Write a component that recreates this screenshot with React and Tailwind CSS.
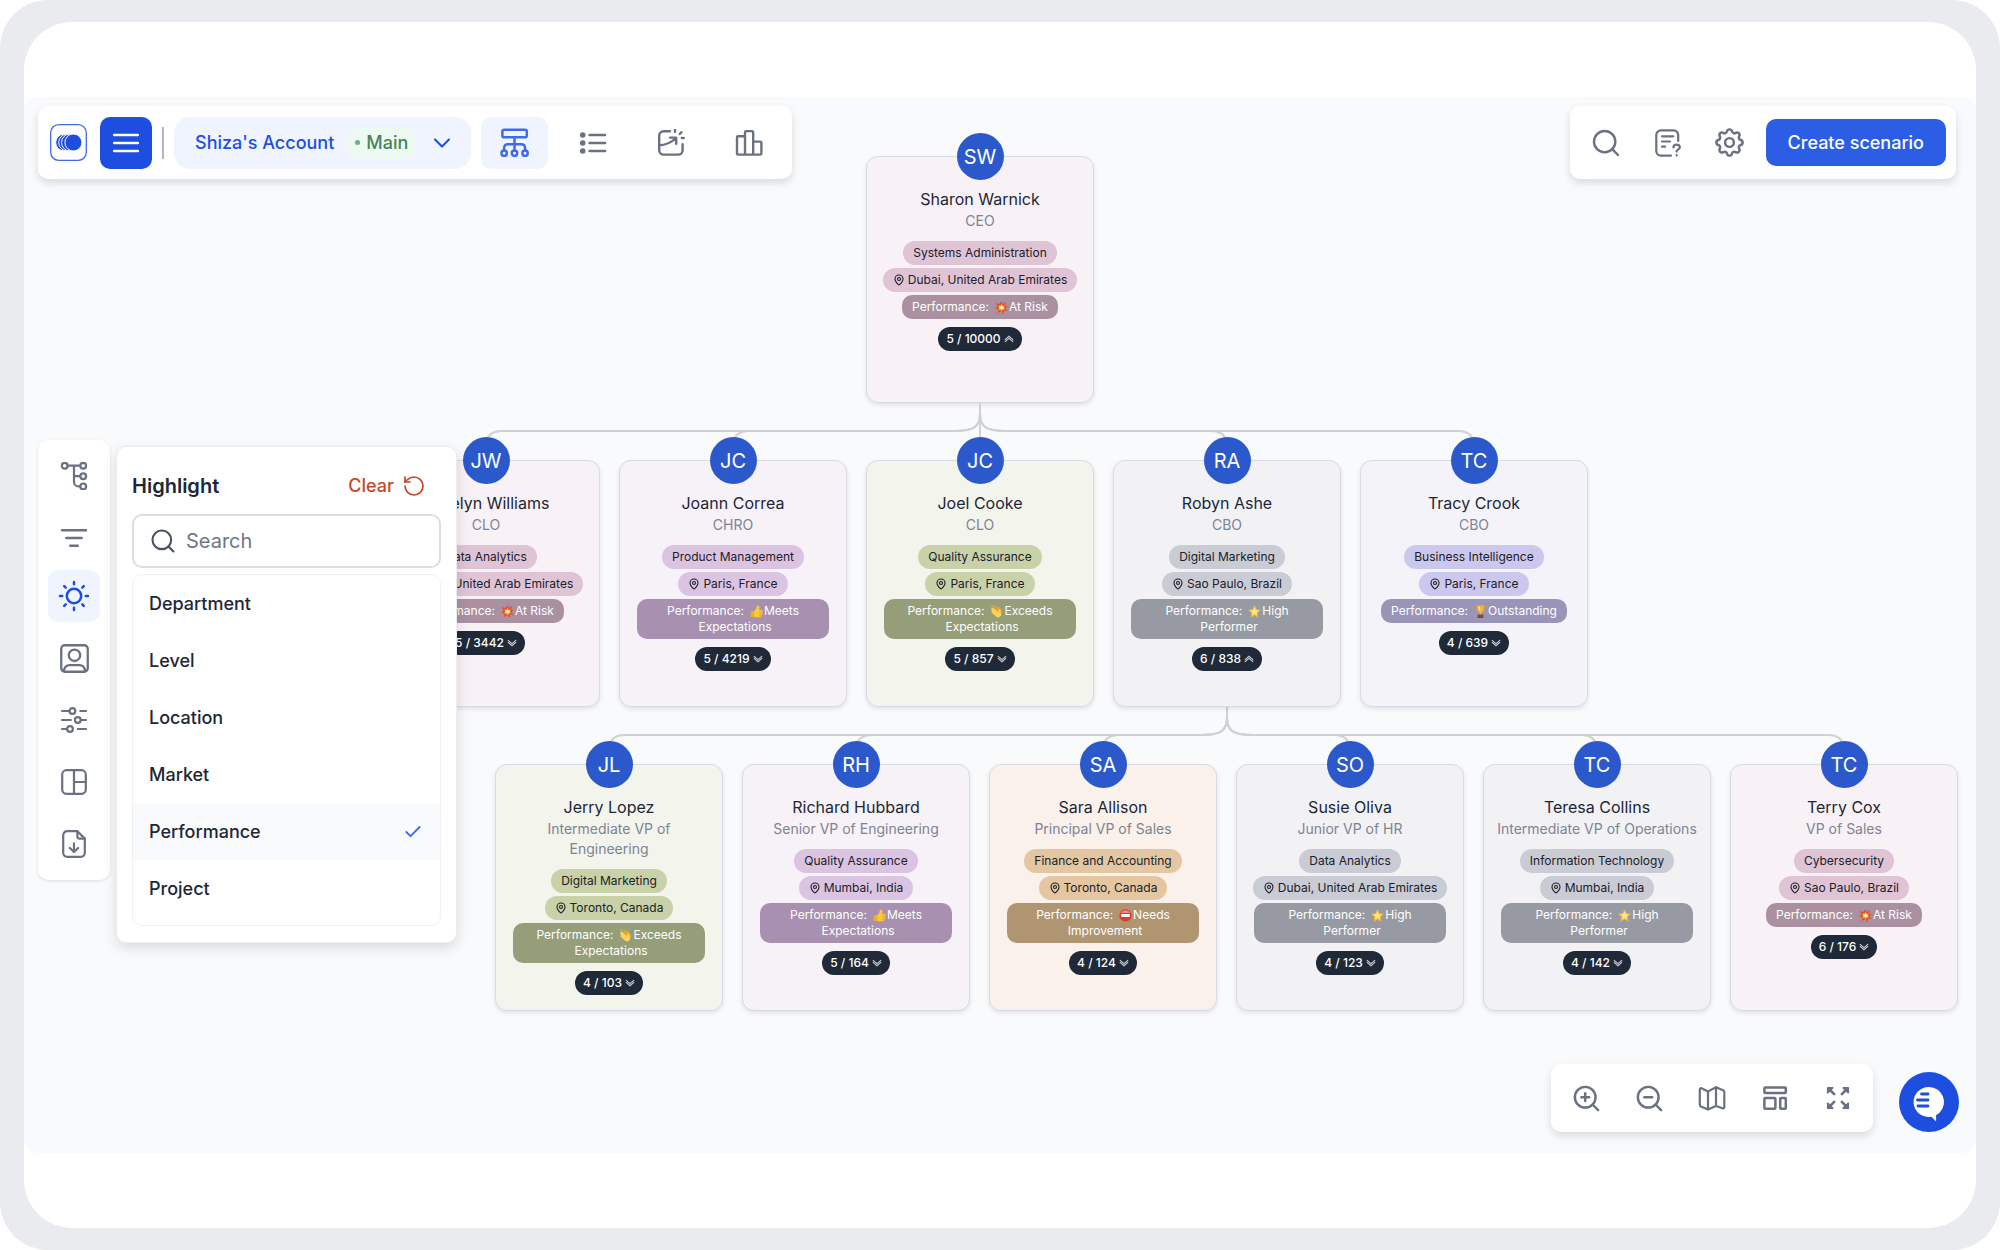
import React from "react";
import clsx from "clsx";
import { Check, ChevronDown, MapPin, RotateCcw, Search, ZoomIn, ZoomOut } from "lucide-react";
import { TbSettings } from "react-icons/tb";

function Icon({ children, className = "size-7", stroke = 2.2 }) {
  return (
    <svg
      viewBox="0 0 28 28"
      className={className}
      fill="none"
      stroke="currentColor"
      strokeWidth={stroke}
      strokeLinecap="round"
      strokeLinejoin="round"
      aria-hidden="true"
    >
      {children}
    </svg>
  );
}

const MenuIcon = () => (
  <Icon stroke={2.5}>
    <path d="M2.2 6h23.6M2.2 14h23.6M2.2 22h23.6" />
  </Icon>
);

const OrgIcon = () => (
  <Icon className="size-[29px]" stroke={2.4}>
    <rect x="2.3" y="1.6" width="23.6" height="7.4" rx="1.8" />
    <path d="M14 9v12.5M4 21.5V19a3.4 3.4 0 0 1 3.4-3.4h13.4a3.4 3.4 0 0 1 3.4 3.4v2.5" />
    <circle cx="4" cy="24.4" r="2.6" />
    <circle cx="14" cy="24.4" r="2.6" />
    <circle cx="24.2" cy="24.4" r="2.6" />
  </Icon>
);

const ListIcon = () => (
  <Icon stroke={2.5}>
    <path d="M10.5 6H26M10.5 14H26M10.5 22H26" />
    <g fill="currentColor" stroke="none">
      <circle cx="3.7" cy="6" r="2.8" />
      <circle cx="3.7" cy="14" r="2.8" />
      <circle cx="3.7" cy="22" r="2.8" />
    </g>
  </Icon>
);

const InsightIcon = () => (
  <Icon stroke={2.4}>
    <path d="M13 2.2H6.6a4.4 4.4 0 0 0-4.4 4.4v14.6a4.4 4.4 0 0 0 4.4 4.4h14.6a4.4 4.4 0 0 0 4.4-4.4v-6" />
    <path d="M2.4 16.2c6.2 0 11.6-2.4 16.6-7.2M13 8.6h6.2v6.2" />
    <path d="M18 .9v2M22.8 5l1.6-1.8M24.8 9h2" />
  </Icon>
);

const BarsIcon = () => (
  <Icon stroke={2.4}>
    <path d="M10 25.6H3.2a1.2 1.2 0 0 1-1.2-1.2V8.4a1.2 1.2 0 0 1 1.2-1.2H10zM10 25.6V3.3a1.2 1.2 0 0 1 1.2-1.2h5.8a1.2 1.2 0 0 1 1.2 1.2v22.3zM18.2 12.6h7a1.2 1.2 0 0 1 1.2 1.2v10.6a1.2 1.2 0 0 1-1.2 1.2h-7z" />
  </Icon>
);

const FormIcon = () => (
  <Icon>
    <path d="M24.2 12V6A4.6 4.6 0 0 0 19.6 1.4H6.9A4.6 4.6 0 0 0 2.3 6v16a4.6 4.6 0 0 0 4.6 4.6H17" />
    <path d="M8 7.3h11.3M8 12.5h8M8 17.7h3" />
    <path d="M19.4 18.4c0-3.8 6.4-3.8 6.4 0 0 2-3.2 2-3.2 4.2M22.6 26.2v.2" />
  </Icon>
);

const TreeIcon = () => (
  <Icon>
    <circle cx="4.7" cy="3.7" r="2.9" />
    <circle cx="23.2" cy="3.7" r="2.9" />
    <circle cx="23.2" cy="14.2" r="2.9" />
    <circle cx="23.2" cy="24.4" r="2.9" />
    <path d="M7.6 3.7h12.6M14 3.7v16.2a4.5 4.5 0 0 0 4.5 4.5h1.7M14 14.2h6.2" />
  </Icon>
);

const FilterIcon = () => (
  <Icon stroke={2.4}>
    <path d="M2 6.3h24M6.3 14h15.4M10.2 21.8h7.6" />
  </Icon>
);

const SunIcon = () => (
  <svg viewBox="0 0 32 32" className="size-8" fill="none" stroke="currentColor" strokeWidth="2.5" strokeLinecap="round" aria-hidden="true">
    <circle cx="16" cy="16" r="7.2" />
    <path d="M16 2v2.2M16 27.8V30M2 16h2.2M27.8 16H30M6.2 6.2l1.5 1.5M24.3 24.3l1.5 1.5M6.2 25.8l1.5-1.5M24.3 7.7l1.5-1.5" />
  </svg>
);

const ProfileIcon = () => (
  <Icon className="size-[29px]">
    <rect x="1.2" y="1.2" width="25.6" height="25.6" rx="3.4" />
    <circle cx="14" cy="10.9" r="5.5" />
    <path d="M3.8 26c.4-4 2.4-5.6 5.6-5.6h9.2c3.2 0 5.2 1.6 5.6 5.6" />
  </Icon>
);

const SlidersIcon = () => (
  <Icon>
    <path d="M2 5h7.4M20.3 5H26M2 14h8.8M20.8 14H26M2 23h4.9M17.8 23H26" />
    <circle cx="12.4" cy="5" r="2.9" />
    <circle cx="17.8" cy="14" r="2.9" />
    <circle cx="10" cy="23" r="2.9" />
  </Icon>
);

const LayoutIcon = () => (
  <Icon>
    <rect x="2.2" y="2.2" width="23.6" height="23.6" rx="4.4" />
    <path d="M14 2.2v23.6M14 14h11.8" />
  </Icon>
);

const FileDownIcon = () => (
  <Icon>
    <path d="M17.4 1.2H7.2a4 4 0 0 0-4 4v17.6a4 4 0 0 0 4 4h13.6a4 4 0 0 0 4-4V8.6z" />
    <path d="M17.4 1.2v5.4a2 2 0 0 0 2 2h5.4M14 13.4v8.4M9.8 18l4.2 4 4.2-4" />
  </Icon>
);

const MapIcon = () => (
  <Icon>
    <path d="M10 7.4 3.5 4.3a1.2 1.2 0 0 0-1.7 1.1v15.4a2 2 0 0 0 1.1 1.8L10 25.6l8-3.6 6.6 2.3a1.2 1.2 0 0 0 1.7-1.1V8a2 2 0 0 0-1.2-1.8L18 3.2zM10 7.4v18.2M18 3.2V22" />
  </Icon>
);

const WidgetsIcon = () => (
  <Icon stroke={2.5}>
    <rect x="3.4" y="3.6" width="21.4" height="5.4" rx=".8" />
    <rect x="3.4" y="14" width="11" height="10.8" rx=".8" />
    <rect x="19.2" y="14" width="5.6" height="10.8" rx=".8" />
  </Icon>
);

const ExpandIcon = () => (
  <Icon stroke={2.6}>
    <path d="M3.8 8.6V3.8h4.8zM19.4 3.8h4.8v4.8zM3.8 19.4v4.8h4.8zM24.2 19.4v4.8h-4.8z" fill="currentColor" strokeWidth="1.8" />
    <path d="M5 5l5.2 5.2M23 5l-5.2 5.2M5 23l5.2-5.2M23 23l-5.2-5.2" />
  </Icon>
);

function Logo() {
  return (
    <svg viewBox="0 0 37 37" className="size-[37px]" aria-hidden="true">
      <rect x=".7" y=".7" width="35.6" height="35.6" rx="8" fill="#fff" stroke="#3f6ae8" strokeWidth="1.3" />
      <g fill="#1d4ee0" stroke="#fff" strokeWidth="1">
        <circle cx="14.2" cy="18.5" r="8.5" />
        <circle cx="17.2" cy="18.5" r="8.5" />
        <circle cx="20" cy="18.5" r="8.5" />
        <circle cx="23.4" cy="18.5" r="8.5" />
      </g>
    </svg>
  );
}

// Small rating symbols shown inside the performance badge
const symbols = {
  risk: (
    <>
      <path d="M8 0l1.7 3.8L13.6 1l-1 4.3L16 6.5l-3 2.2 2.6 4-4.2-1L10 16l-2.4-3.6L3.4 15l.6-4.4L0 9.6l3-2.4L.8 2.6l4.6 1.2z" fill="#e0532f" />
      <path d="M8.2 3.4l1 2.6 2.8-.4-1.2 2.4 1.6 2.2-2.8-.2-1.2 2.6-1.4-2.4-3 .6L5.400 8 4 5.600l2.800.4z" fill="#ffd257" />
      <circle cx="8.2" cy="8" r="1.8" fill="#fff7d8" />
    </>
  ),
  meets: (
    <>
      <path d="M5 7.4C7.4 5.6 8.2 3.4 8.4.8c1.9-.9 3.4.6 3.2 2.8l-.5 2.7H14c1.5 0 1.9 1.5 1.1 2.3.8.9.5 1.9-.3 2.4.5.9.1 1.8-.7 2.2.2 1.2-.6 2-1.7 2H7.8L5 14.4z" fill="#fbc83c" />
      <path d="M.8 7.6h4.4v7.2H.8z" fill="#f0ac2b" />
      <path d="M11.5 8.6h3.3M11.5 11h3M11.3 13.2h2.6" stroke="#d08b1f" strokeWidth=".7" />
    </>
  ),
  exceeds: (
    <>
      <path d="M5 2.2l1.8-1c1-.6 1.9.3 1.6 1.2l3.6.4 2.6 5.200c.8 3.400-1.500 6.400-4.600 6.200z" fill="#e8a32c" />
      <path d="M2.4 4.4C1.8 3.2 3.2 2.4 4 3.4l6 5.600.6-3c.6-1.400 2.200-1 2.200.4l.8 5.400c0 3-3.400 4.600-6 2.800L2 9.200c-.8-.8.200-2 1-1.400L1.400 6c-.6-1 .4-1.800 1-1.600z" fill="#ffd25a" />
      <path d="M1.6.8l.8 1.4M3.8.2l.2 1.4" stroke="#f4d58a" strokeWidth=".9" />
    </>
  ),
  high: (
    <>
      <path d="M8 0l2.400 5.200 5.600.6-4.200 3.900L13 15.600 8 12.800l-5 2.800 1.200-5.900L0 5.800l5.600-.6z" fill="#f7b92d" />
      <path d="M8 2.800l1.500 3.500 3.800.4-2.800 2.600.8 3.700L8 11.100 4.700 13l.8-3.700-2.800-2.600 3.800-.4z" fill="#ffe58a" />
    </>
  ),
  outstanding: (
    <>
      <path d="M3.6 2H.8c0 3.6 1.400 5 4 5.200M12.400 2h2.800c0 3.600-1.400 5-4 5.200" fill="none" stroke="#d9972a" strokeWidth="1.2" />
      <path d="M3.4.6h9.200c0 5-1.200 8-3.600 9v2.200H7V9.600C4.600 8.600 3.400 5.600 3.400.6z" fill="#efb23a" />
      <path d="M5.600 1.600h2c0 3 .1 4.800.4 6.600-1.800-1-2.400-3.400-2.400-6.600z" fill="#ffe08a" />
      <path d="M4.400 11.800h7.200V16H4.400z" fill="#7c4a2d" />
    </>
  ),
  needs: (
    <>
      <circle cx="8" cy="8" r="7.6" fill="#e13a2f" />
      <path d="M2 5a7 7 0 0 1 12 0z" fill="#f4877b" />
      <rect x="2.6" y="6.2" width="10.8" height="3.6" rx=".8" fill="#fff" />
    </>
  ),
};

const ratings = {
  risk: ["At Risk"],
  meets: ["Meets", "Expectations"],
  exceeds: ["Exceeds", "Expectations"],
  high: ["High", "Performer"],
  outstanding: ["Outstanding"],
  needs: ["Needs", "Improvement"],
};

const tones = {
  pink: { card: "bg-[#f8f1f6]", pill: "bg-[#dfc4d5]", rating: "bg-[#ab90a2]" },
  purple: { card: "bg-[#f7f1f8]", pill: "bg-[#dbc4e1]", rating: "bg-[#a890b0]" },
  green: { card: "bg-[#f3f4eb]", pill: "bg-[#c8d1a8]", rating: "bg-[#959e79]" },
  gray: { card: "bg-[#f2f2f5]", pill: "bg-[#c9cbd5]", rating: "bg-[#979aa3]" },
  lavender: { card: "bg-[#f4f3fa]", pill: "bg-[#ccc7ec]", rating: "bg-[#9a94b8]" },
  orange: { card: "bg-[#f9f1ea]", pill: "bg-[#e4c7a1]", rating: "bg-[#af9570]" },
};

const ceo = { initials: "SW", name: "Sharon Warnick", title: "CEO", dept: "Systems Administration", place: "Dubai, United Arab Emirates", rating: "risk", count: "5 / 10000", open: true, tone: "pink" };

const chiefs = [
  { initials: "JW", name: "Jocelyn Williams", title: "CLO", dept: "Data Analytics", place: "Dubai, United Arab Emirates", rating: "risk", count: "5 / 3442", tone: "pink" },
  { initials: "JC", name: "Joann Correa", title: "CHRO", dept: "Product Management", place: "Paris, France", rating: "meets", count: "5 / 4219", tone: "purple" },
  { initials: "JC", name: "Joel Cooke", title: "CLO", dept: "Quality Assurance", place: "Paris, France", rating: "exceeds", count: "5 / 857", tone: "green" },
  { initials: "RA", name: "Robyn Ashe", title: "CBO", dept: "Digital Marketing", place: "Sao Paulo, Brazil", rating: "high", count: "6 / 838", open: true, tone: "gray" },
  { initials: "TC", name: "Tracy Crook", title: "CBO", dept: "Business Intelligence", place: "Paris, France", rating: "outstanding", count: "4 / 639", tone: "lavender" },
];

const vps = [
  { initials: "JL", name: "Jerry Lopez", title: "Intermediate VP of Engineering", dept: "Digital Marketing", place: "Toronto, Canada", rating: "exceeds", count: "4 / 103", tone: "green" },
  { initials: "RH", name: "Richard Hubbard", title: "Senior VP of Engineering", dept: "Quality Assurance", place: "Mumbai, India", rating: "meets", count: "5 / 164", tone: "purple" },
  { initials: "SA", name: "Sara Allison", title: "Principal VP of Sales", dept: "Finance and Accounting", place: "Toronto, Canada", rating: "needs", count: "4 / 124", tone: "orange" },
  { initials: "SO", name: "Susie Oliva", title: "Junior VP of HR", dept: "Data Analytics", place: "Dubai, United Arab Emirates", rating: "high", count: "4 / 123", tone: "gray" },
  { initials: "TC", name: "Teresa Collins", title: "Intermediate VP of Operations", dept: "Information Technology", place: "Mumbai, India", rating: "high", count: "4 / 142", tone: "gray" },
  { initials: "TC", name: "Terry Cox", title: "VP of Sales", dept: "Cybersecurity", place: "Sao Paulo, Brazil", rating: "risk", count: "6 / 176", tone: "pink" },
];

function CountArrow({ open }) {
  return (
    <svg
      viewBox="0 0 10 8"
      className={clsx("h-2 w-2.5", open && "rotate-180")}
      fill="none"
      stroke="#c3c7ce"
      strokeWidth="1.2"
      strokeLinecap="round"
      strokeLinejoin="round"
      aria-hidden="true"
    >
      <path d="M1.2 1.4 5 4.6l3.8-3.2M1.2 3.4 5 6.800l3.800-3.400" />
    </svg>
  );
}

function PersonCard({ person }) {
  const tone = tones[person.tone];
  const [first, second] = ratings[person.rating];

  return (
    <article
      className={clsx(
        "flex h-[247px] w-[228px] shrink-0 flex-col items-center rounded-xl border border-[#d9dbe3] px-[11px] text-center shadow-[0_2px_4px_rgba(16,24,40,0.10)]",
        tone.card
      )}
    >
      <div className="-mt-6 flex size-[47px] shrink-0 items-center justify-center rounded-full bg-[#2b59cb] text-xl text-white">
        {person.initials}
      </div>
      <h3 className="mt-[7px] text-base leading-6 text-[#1d2736]">{person.name}</h3>
      <p className="text-sm leading-5 text-[#7d8494]">{person.title}</p>
      <div className="mt-2.5 flex max-w-[192px] flex-col items-center gap-[3px] text-xs leading-4 text-[#1c2027]">
        <span className={clsx("rounded-full px-2.5 py-1", tone.pill)}>{person.dept}</span>
        <span className={clsx("flex items-center gap-[3px] rounded-full px-2.5 py-1 whitespace-nowrap", tone.pill)}>
          <MapPin className="size-3 shrink-0" strokeWidth={2.2} />
          {person.place}
        </span>
        <span className={clsx("flex flex-wrap justify-center rounded-[10px] px-2.5 py-1 text-white", tone.rating)}>
          <span className="mr-1.5">Performance:</span>
          <span className="flex items-center gap-px">
            <svg viewBox="0 0 16 16" className="size-[13px]" aria-hidden="true">
              {symbols[person.rating]}
            </svg>
            {first}
          </span>
          {second && <span className="ml-1">{second}</span>}
        </span>
      </div>
      <button type="button" className="mt-2 flex items-center gap-[3px] rounded-full bg-[#1f2937] px-2 py-1 text-xs leading-4 font-medium text-white">
        {person.count}
        <CountArrow open={person.open} />
      </button>
    </article>
  );
}

// Curved lines that fan out from a parent to each child below it
function Connectors({ from, to }) {
  return (
    <svg className="h-[57px] w-[1216px] overflow-visible" fill="none" stroke="#d0d1d3" strokeWidth="2" aria-hidden="true">
      {to.map((x) => {
        const dir = Math.sign(x - from);
        return (
          <path
            key={x}
            d={
              dir === 0
                ? `M${from} 0V40`
                : `M${from} 0V10C${from} 24 ${from + dir * 6} 28 ${from + dir * 26} 28H${x - dir * 15}Q${x - dir * 3} 28 ${x} 39`
            }
          />
        );
      })}
    </svg>
  );
}

function OrgChart() {
  return (
    <section aria-label="Org chart" className="absolute top-[59px] left-[348px]">
      <div className="flex w-[1216px] justify-center">
        <PersonCard person={ceo} />
      </div>
      <Connectors from={608} to={[114, 361, 608, 855, 1102]} />
      <div className="relative flex gap-[19px]">
        {chiefs.map((person) => (
          <PersonCard key={person.name} person={person} />
        ))}
      </div>
      <Connectors from={855} to={[237, 484, 731, 978, 1225, 1472]} />
      <div className="relative ml-[123px] flex gap-[19px]">
        {vps.map((person) => (
          <PersonCard key={person.name} person={person} />
        ))}
      </div>
    </section>
  );
}

const barClass = "pointer-events-auto rounded-[10px] bg-white shadow-[0_4px_8px_rgba(0,0,0,0.13)]";

function ToolButton({ label, active, className, children }) {
  return (
    <button
      type="button"
      aria-label={label}
      className={clsx(
        "flex h-[52px] shrink-0 items-center justify-center rounded-[10px]",
        active ? "bg-[#eff4ff]" : "text-[#6a7183]",
        className
      )}
    >
      {children}
    </button>
  );
}

function TopBar() {
  return (
    <header className="flex items-start justify-between pr-[3px]">
      <nav className={clsx(barClass, "flex h-[73px] items-center pr-2.5 pl-3")}>
        <a href="#home" aria-label="Home">
          <Logo />
        </a>
        <button type="button" aria-label="Menu" className="ml-[13px] flex size-[52px] items-center justify-center rounded-[10px] bg-[#1d4ee0] text-white">
          <MenuIcon />
        </button>
        <div className="mx-2.5 h-8 w-0.5 bg-[#b3b6c0]" />
        <button type="button" className="flex h-[52px] items-center rounded-2xl bg-[#eff4ff] pr-[15px] pl-[21px] text-lg font-medium text-[#1d4ee0]">
          Shiza's Account
          <span className="ml-[11px] flex h-8 items-center gap-1.5 rounded-full bg-[#edfaf1] px-2.5 text-[#46835a]">
            <span className="size-[5px] rounded-full bg-[#6faf88]" />
            Main
          </span>
          <ChevronDown className="ml-2.5 size-7" strokeWidth={1.8} />
        </button>
        <div className="ml-2.5 flex gap-[11px]">
          <ToolButton label="Org chart" active className="w-[67px] text-[#3f6ae8]">
            <OrgIcon />
          </ToolButton>
          <ToolButton label="List" className="w-[67px]">
            <ListIcon />
          </ToolButton>
          <ToolButton label="Insights" className="w-[67px]">
            <InsightIcon />
          </ToolButton>
          <ToolButton label="Charts" className="w-[67px]">
            <BarsIcon />
          </ToolButton>
        </div>
      </nav>

      <div className={clsx(barClass, "flex h-[73px] items-center gap-2.5 px-2.5")}>
        <ToolButton label="Search" className="w-[52px]">
          <Search className="size-8" strokeWidth={1.8} />
        </ToolButton>
        <ToolButton label="Survey" className="w-[52px]">
          <FormIcon />
        </ToolButton>
        <ToolButton label="Settings" className="w-[52px]">
          <TbSettings className="size-[35px]" strokeWidth={1.7} />
        </ToolButton>
        <button type="button" className="h-[47px] rounded-[10px] bg-[#2c5de5] px-[22px] text-lg font-medium text-white">
          Create scenario
        </button>
      </div>
    </header>
  );
}

function SideBar() {
  return (
    <nav className="pointer-events-auto flex flex-col gap-2.5 rounded-[10px] bg-white p-2.5 shadow-[0_1px_3px_rgba(0,0,0,0.12)]">
      <ToolButton label="Hierarchy" className="w-[52px]">
        <TreeIcon />
      </ToolButton>
      <ToolButton label="Filter" className="-mb-1 w-[52px]">
        <FilterIcon />
      </ToolButton>
      <ToolButton label="Highlight" active className="w-[52px] text-[#1d4ee0]">
        <SunIcon />
      </ToolButton>
      <ToolButton label="Profile" className="w-[52px]">
        <ProfileIcon />
      </ToolButton>
      <ToolButton label="Adjust" className="w-[52px]">
        <SlidersIcon />
      </ToolButton>
      <ToolButton label="Layout" className="w-[52px]">
        <LayoutIcon />
      </ToolButton>
      <ToolButton label="Export" className="w-[52px]">
        <FileDownIcon />
      </ToolButton>
    </nav>
  );
}

const fields = ["Department", "Level", "Location", "Market", "Performance", "Project"];

function HighlightPanel() {
  const selected = "Performance";

  return (
    <section className="pointer-events-auto mt-1.5 w-[341px] rounded-[10px] border border-[#ebecef] bg-white px-[15px] pb-4 shadow-[0_5px_14px_rgba(0,0,0,0.13)]">
      <div className="flex h-[67px] items-end justify-between pr-[15px] pb-3.5">
        <h2 className="text-xl leading-7 font-semibold text-[#1d2736]">Highlight</h2>
        <button type="button" className="flex items-center gap-2 text-lg leading-7 font-medium text-[#c8452a]">
          Clear
          <RotateCcw className="size-6" strokeWidth={1.7} />
        </button>
      </div>
      <label className="flex h-[54px] items-center rounded-[10px] border-2 border-[#dcdde3] pr-3 pl-[15px] text-[#4b5263]">
        <Search className="size-7 shrink-0" strokeWidth={1.8} />
        <input
          type="text"
          aria-label="Search fields"
          placeholder="Search"
          className="ml-[9px] min-w-0 flex-1 bg-transparent text-xl outline-none placeholder:text-[#6f7688]"
        />
      </label>
      <ul className="mt-1.5 rounded-[10px] border border-[#f0f1f4] pb-2">
        {fields.map((field) => (
          <li key={field}>
            <button
              type="button"
              className={clsx(
                "flex h-[57px] w-full items-center justify-between pr-[17px] pl-4 text-lg font-medium text-[#1d2736]",
                field === selected && "bg-[#f9fafc]"
              )}
            >
              {field}
              {field === selected && <Check className="size-5 text-[#3f6ae8]" strokeWidth={2.2} />}
            </button>
          </li>
        ))}
      </ul>
    </section>
  );
}

function ChatButton() {
  return (
    <button type="button" aria-label="Chat" className="pointer-events-auto size-[60px] rounded-full bg-[#1d4ee0]">
      <svg viewBox="0 0 60 60" aria-hidden="true">
        <path d="M30 15a15 15 0 0 1 10.5 25.7l-3.4 2.600v6.200l-4.600-4.800A15 15 0 1 1 30 15z" fill="#fff" />
        <path d="M22.5 22H29M18.5 28H29M19 34H29" stroke="#1d4ee0" strokeWidth="2.8" strokeLinecap="round" />
      </svg>
    </button>
  );
}

function BottomBar() {
  return (
    <footer className="mt-auto flex items-end justify-end gap-[26px]">
      <div className={clsx(barClass, "flex h-[68px] items-center gap-[11px] px-[9px]")}>
        <ToolButton label="Zoom in" className="w-[52px]">
          <ZoomIn className="size-[31px]" strokeWidth={1.9} />
        </ToolButton>
        <ToolButton label="Zoom out" className="w-[52px]">
          <ZoomOut className="size-[31px]" strokeWidth={1.9} />
        </ToolButton>
        <ToolButton label="Map" className="w-[52px]">
          <MapIcon />
        </ToolButton>
        <ToolButton label="Widgets" className="w-[52px]">
          <WidgetsIcon />
        </ToolButton>
        <ToolButton label="Full screen" className="w-[52px]">
          <ExpandIcon />
        </ToolButton>
      </div>
      <ChatButton />
    </footer>
  );
}

export default function App() {
  return (
    <div className="h-screen bg-white font-['Inter',sans-serif]">
      <div className="flex h-full rounded-[48px] bg-[#eaebef] px-6 py-[22px]">
        <div className="flex flex-1 flex-col rounded-[48px] bg-white py-[75px]">
          <main className="relative flex flex-1 flex-col overflow-hidden rounded-[14px] bg-[#f9fafc]">
            <OrgChart />
            <div className="pointer-events-none relative flex flex-1 flex-col pt-[9px] pr-[17px] pb-[21px] pl-3.5">
              <TopBar />
              <div className="mt-[261px] flex items-start gap-1.5">
                <SideBar />
                <HighlightPanel />
              </div>
              <BottomBar />
            </div>
          </main>
        </div>
      </div>
    </div>
  );
}
